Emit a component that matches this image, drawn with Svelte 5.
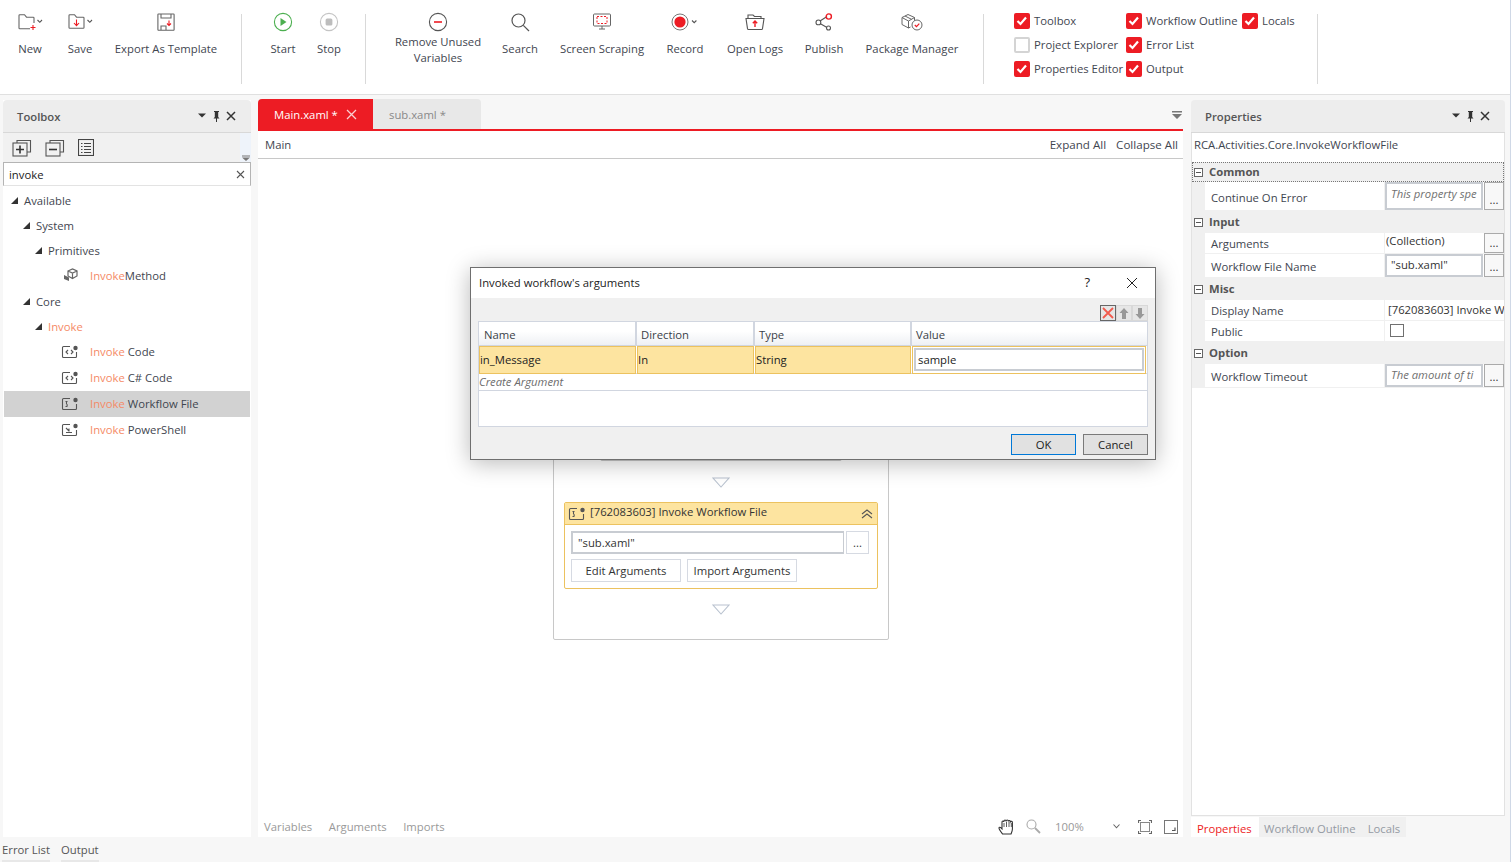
<script>
  const checks = [
    ['Toolbox', true], ['Workflow Outline', true], ['Locals', true],
    ['Project Explorer', false], ['Error List', true], null,
    ['Properties Editor', true], ['Output', true], null
  ];
  const leaves = [
    ['code', 'Code'], ['code', 'C# Code'], ['wf', 'Workflow File'], ['ps', 'PowerShell']
  ];
</script>

{#snippet activity(kind)}
  <svg class="aicon" width="18" height="14" viewBox="0 0 18 14" fill="none" stroke="#555" stroke-width="1.1">
    <path d="M9 1.5H2.5a1 1 0 0 0-1 1v9a1 1 0 0 0 1 1h12a1 1 0 0 0 1-1V7"/>
    <circle cx="14.5" cy="3" r="2.2" fill="#555" stroke="none"/>
    {#if kind === 'code'}
      <path d="M7 5L5 7l2 2M10 5l2 2-2 2"/>
    {:else if kind === 'wf'}
      <path d="M4.5 4.5h2M5.5 4.5v2.5M5.5 7c1 .5 1 2 0 2.5M4.5 9.5h2"/>
    {:else}
      <path d="M5 5l3 3M8 8.6v-3M5 9.5h6"/>
    {/if}
  </svg>
{/snippet}

{#snippet panelHead(title)}
  <div class="phead">
    <span class="ptitle">{title}</span>
    <svg width="40" height="12" viewBox="0 0 40 12">
      <path d="M0 3.5h8l-4 4z" fill="#333"/>
      <path d="M16 1h5v1h-.8v5l1.3 1.5h-2.500V12h-1V8.500h-2.500L16.800 7V2H16z" fill="#333"/>
      <path d="M29 2l8 8M37 2l-8 8" stroke="#333" stroke-width="1.5"/>
    </svg>
  </div>
{/snippet}

{#snippet ellipsisBtn()}
  <span class="dots">...</span>
{/snippet}

<div class="app">
  <header class="toolbar">
    <div class="group g1">
      <div class="tool w50">
        <div class="ic">
          <svg width="26" height="18" viewBox="0 0 26 18" fill="none" stroke="#666" stroke-width="1.1">
            <path d="M2 15V2.5a.8.8 0 0 1 .8-.8h4.7l2 2.5h6.7a.8.8 0 0 1 .8.8V10M13 15.7H2.8a.8.8 0 0 1-.8-.8"/>
            <path d="M13.5 14.5h5M16 12v5" stroke="#ed1c24"/>
            <path d="M20.5 7l2.3 2.3L25 7" stroke="#555"/>
          </svg>
        </div>
        <div class="lbl">New</div>
      </div>
      <div class="tool w50">
        <div class="ic">
          <svg width="26" height="18" viewBox="0 0 26 18" fill="none" stroke="#666" stroke-width="1.1">
            <path d="M2 14.5V2.5a.8.8 0 0 1 .8-.8h4.7l2 2.5h6.7a.8.8 0 0 1 .8.8v9.5a.8.8 0 0 1-.8.8h-13.4a.8.8 0 0 1-.8-.8z"/>
            <path d="M9.5 6.5v6M7 10l2.5 2.7L12 10" stroke="#ed1c24"/>
            <path d="M20.5 7l2.3 2.3L25 7" stroke="#555"/>
          </svg>
        </div>
        <div class="lbl">Save</div>
      </div>
      <div class="tool w122">
        <div class="ic">
          <svg width="18" height="18" viewBox="0 0 18 18" fill="none" stroke="#666" stroke-width="1.1">
            <path d="M1.5 1h15a.6.6 0 0 1 .6.6v15a.6.6 0 0 1-.6.6H1.5a.6.6 0 0 1-.6-.6V1.6a.6.6 0 0 1 .6-.6zM4 1v4h10V1M4 17v-4h5v4"/>
            <path d="M12 7.5v5M10 10.5l2 2 2-2" stroke="#ed1c24"/>
          </svg>
        </div>
        <div class="lbl">Export As Template</div>
      </div>
    </div>
    <div class="group g2">
      <div class="tool w46">
        <div class="ic">
          <svg width="20" height="20" viewBox="0 0 20 20" fill="none">
            <circle cx="10" cy="10" r="8.6" stroke="#4caf50" stroke-width="1.1"/>
            <path d="M7.5 6l6 4-6 4z" fill="#4caf50"/>
          </svg>
        </div>
        <div class="lbl">Start</div>
      </div>
      <div class="tool w46">
        <div class="ic">
          <svg width="20" height="20" viewBox="0 0 20 20" fill="none">
            <circle cx="10" cy="10" r="8.6" stroke="#c4c4c4" stroke-width="1.1"/>
            <rect x="6.6" y="6.6" width="6.8" height="6.8" rx="1.5" fill="#bdbdbd"/>
          </svg>
        </div>
        <div class="lbl">Stop</div>
      </div>
    </div>
    <div class="group g3">
      <div class="tool w110">
        <div class="ic">
          <svg width="20" height="20" viewBox="0 0 20 20" fill="none">
            <circle cx="10" cy="10" r="8.6" stroke="#555" stroke-width="1.1"/>
            <path d="M6 10h8" stroke="#ed1c24" stroke-width="1.6"/>
          </svg>
        </div>
        <div class="lbl two">Remove Unused<br />Variables</div>
      </div>
      <div class="tool w54">
        <div class="ic">
          <svg width="20" height="20" viewBox="0 0 20 20" fill="none" stroke="#555" stroke-width="1.2">
            <circle cx="8.5" cy="8.5" r="6.5"/>
            <path d="M13.3 13.3L19 19"/>
          </svg>
        </div>
        <div class="lbl">Search</div>
      </div>
      <div class="tool w110">
        <div class="ic">
          <svg width="20" height="18" viewBox="0 0 20 18" fill="none" stroke="#666" stroke-width="1">
            <rect x="1.5" y="1" width="17" height="12" rx="1"/>
            <path d="M7 16h6M10 13v3"/>
            <rect x="5" y="3.5" width="10" height="7" stroke="#ed1c24" stroke-dasharray="2 1.5"/>
          </svg>
        </div>
        <div class="lbl">Screen Scraping</div>
      </div>
      <div class="tool w56">
        <div class="ic">
          <svg width="28" height="20" viewBox="0 0 28 20" fill="none">
            <circle cx="9" cy="10" r="8" stroke="#777" stroke-width="1"/>
            <circle cx="9" cy="10" r="5.6" fill="#ed1c24"/>
            <path d="M21 8.5l2.2 2.2 2.2-2.2" stroke="#555" stroke-width="1.1"/>
          </svg>
        </div>
        <div class="lbl">Record</div>
      </div>
      <div class="tool w84">
        <div class="ic">
          <svg width="20" height="18" viewBox="0 0 20 18" fill="none" stroke="#555" stroke-width="1.1">
            <path d="M3 5V2h5l1.5 1.5H16V5M1 5.5h18l-1.5 10.2a1 1 0 0 1-1 .8h-13a1 1 0 0 1-1-.8z"/>
            <path d="M10 14V8M7.8 10.2L10 8l2.2 2.2" stroke="#ed1c24" stroke-width="1.4"/>
          </svg>
        </div>
        <div class="lbl">Open Logs</div>
      </div>
      <div class="tool w54">
        <div class="ic">
          <svg width="18" height="18" viewBox="0 0 18 18" fill="none" stroke="#555" stroke-width="1.1">
            <path d="M5 8l7-4.5M5 10.5l7 4"/>
            <circle cx="3.4" cy="9.4" r="2.4"/>
            <circle cx="13.5" cy="15" r="2"/>
            <circle cx="13.8" cy="3.5" r="2.6" stroke="#ed1c24" stroke-width="1.4"/>
          </svg>
        </div>
        <div class="lbl">Publish</div>
      </div>
      <div class="tool w122">
        <div class="ic">
          <svg width="22" height="18" viewBox="0 0 22 18" fill="none" stroke="#666" stroke-width="1">
            <path d="M1 4.5L7 1.5l6.5 3v3M1 4.5v7l6.5 3.5 2-1M1 4.5L7.500 8v7M7.500 8l6-3.500M4 3l6.500 3.300"/>
            <circle cx="16" cy="12" r="5"/>
            <path d="M13.800 12l1.700 1.700 2.800-3" stroke="#ed1c24" stroke-width="1.2"/>
          </svg>
        </div>
        <div class="lbl">Package Manager</div>
      </div>
    </div>
    <div class="group g4">
      <div class="checks">
        {#each checks as c}
          {#if c}
            <div class="chk">
              <span class="box" class:on={c[1]}>
                {#if c[1]}
                  <svg width="16" height="16" viewBox="0 0 16 16" fill="none">
                    <path d="M3.500 8l3 3 5.500-6.500" stroke="#fff" stroke-width="2.200"/>
                  </svg>
                {/if}
              </span>
              <span class="chktext">{c[0]}</span>
            </div>
          {:else}
            <div></div>
          {/if}
        {/each}
      </div>
    </div>
  </header>

  <main class="body">
    <section class="left">
      {@render panelHead('Toolbox')}
      <div class="ltools">
        <svg width="20" height="18" viewBox="0 0 20 18" fill="none" stroke="#555" stroke-width="1.1">
          <path d="M5 4V1.500h13.500V13H15"/><rect x="1" y="4" width="14" height="13"/>
          <path d="M4 10.500h8M8 6.500v8" stroke="#333" stroke-width="1.600"/>
        </svg>
        <svg width="20" height="18" viewBox="0 0 20 18" fill="none" stroke="#555" stroke-width="1.1">
          <path d="M5 4V1.500h13.500V13H15"/><rect x="1" y="4" width="14" height="13"/>
          <path d="M4 10.500h8" stroke="#333" stroke-width="1.600"/>
        </svg>
        <svg width="16" height="17" viewBox="0 0 16 17" fill="none" stroke="#444" stroke-width="1.100">
          <rect x=".5" y=".5" width="15" height="16"/>
          <path d="M3 4.500h1.500M6 4.500h7M3 7.500h1.500M6 7.500h7M3 10.500h1.500M6 10.500h7M3 13.500h1.500M6 13.500h7"/>
        </svg>
        <div class="scrollcap">
          <svg width="8" height="6" viewBox="0 0 8 6"><path d="M0 .5h8v1H0zM0 2.500h8L4 6z" fill="#777"/></svg>
        </div>
      </div>
      <div class="search">
        <span>invoke</span>
        <svg width="9" height="9" viewBox="0 0 9 9"><path d="M1 1l7 7M8 1L1 8" stroke="#555" stroke-width="1.100"/></svg>
      </div>
      <div class="tree">
        <div class="row d0"><i class="tri"></i>Available</div>
        <div class="row d1"><i class="tri"></i>System</div>
        <div class="row d2"><i class="tri"></i>Primitives</div>
        <div class="row leaf m">
          <svg width="15" height="14" viewBox="0 0 15 14" fill="none" stroke="#666" stroke-width="1.200">
            <path d="M5 3l4.500-2 4.500 2v5l-4.500 2.500L5 8zM5 3l4.500 2 4.500-2M9.500 5v5"/>
            <path d="M1 7l5 2.500V13L1 11z" fill="#666" stroke="none"/>
          </svg>
          <span><b>Invoke</b>Method</span>
        </div>
        <div class="row d1 core"><i class="tri"></i>Core</div>
        <div class="row d2"><i class="tri"></i><b>Invoke</b></div>
        {#each leaves as l}
          <div class="row leaf" class:sel={l[1] === 'Workflow File'}>
            {@render activity(l[0])}
            <span><b>Invoke</b> {l[1]}</span>
          </div>
        {/each}
      </div>
    </section>

    <section class="center">
      <div class="tabs">
        <div class="tab active">Main.xaml *
          <svg width="11" height="11" viewBox="0 0 11 11"><path d="M1 1l9 9M10 1l-9 9" stroke="#fbd0d2" stroke-width="1.300"/></svg>
        </div>
        <div class="tab">sub.xaml *</div>
        <svg class="tabmenu" width="10" height="9" viewBox="0 0 10 9"><path d="M0 0h10v1.500H0zM0 3h10L5 8z" fill="#777"/></svg>
      </div>
      <div class="crumb">
        <span>Main</span>
        <div class="expand"><span>Expand All</span><span>Collapse All</span></div>
      </div>
      <div class="canvas">
        <div class="seq">
          <div class="prev"></div>
          <svg class="drop" width="18" height="11" viewBox="0 0 18 11" fill="none"><path d="M1 1h16l-8 9z" stroke="#b9c2cf" stroke-width="1.100"/></svg>
          <div class="act">
            <div class="acthead">
              {@render activity('wf')}
              <span class="acttitle">[762083603] Invoke Workflow File</span>
              <svg width="12" height="10" viewBox="0 0 12 10" fill="none" stroke="#555" stroke-width="1.100"><path d="M1 5l5-4 5 4M1 9l5-4 5 4"/></svg>
            </div>
            <div class="actbody">
              <div class="actfile">
                <span class="fileinput">"sub.xaml"</span>
                <span class="filedots">...</span>
              </div>
              <div class="actbtns">
                <span class="abtn edit">Edit Arguments</span>
                <span class="abtn imp">Import Arguments</span>
              </div>
            </div>
          </div>
          <svg class="drop d2nd" width="18" height="11" viewBox="0 0 18 11" fill="none"><path d="M1 1h16l-8 9z" stroke="#b9c2cf" stroke-width="1.100"/></svg>
        </div>
      </div>
      <div class="cfoot">
        <div class="cfl"><span>Variables</span><span>Arguments</span><span>Imports</span></div>
        <div class="cfr">
          <svg width="18" height="18" viewBox="0 0 18 18" fill="#fff" stroke="#333" stroke-width="1.100">
            <path d="M4.500 16c-1.500-2-3.500-4.500-3.500-6 0-1 1.200-1 2-.2l1 1V4c0-1.300 1.700-1.300 1.800 0 0-2.500 2.200-2.500 2.300-.5 0-2 2.200-2 2.300 0 .2-1.300 2-1.200 2 .3.500-.8 2-.6 2 .7V11c0 2-.8 3.500-1.400 5z"/>
            <path d="M6 5v4M8.500 4v5M11 4v5M13.300 5v4" stroke-width=".8"/>
          </svg>
          <svg class="mag" width="15" height="15" viewBox="0 0 15 15" fill="none" stroke="#aaa" stroke-width="1.100">
            <circle cx="5.500" cy="5.500" r="4.500"/><path d="M9 9l5 5" stroke-width="1.800"/>
          </svg>
          <span class="zoomv">100%</span>
          <svg class="chev" width="7" height="5" viewBox="0 0 7 5" fill="none" stroke="#666" stroke-width="1.100"><path d="M.5.500L3.500 3.800 6.500.500"/></svg>
          <svg class="fit" width="14" height="14" viewBox="0 0 14 14" fill="none" stroke="#666" stroke-width="1">
            <rect x="2.500" y="2.500" width="9" height="9" stroke="#888"/>
            <path d="M.5 3V.500H3M11 .5h2.500V3M.5 11v2.500H3M11 13.500h2.500V11" stroke-width="1.200"/>
          </svg>
          <svg class="over" width="14" height="14" viewBox="0 0 14 14" fill="none" stroke="#777" stroke-width="1">
            <rect x=".5" y=".5" width="13" height="13"/>
            <path d="M8 10.500h3v-3" stroke="#555" stroke-width="1.200"/>
          </svg>
        </div>
      </div>

      <div class="dialog">
        <div class="dtitle">
          <span class="dname">Invoked workflow's arguments</span>
          <span class="help">?</span>
          <svg width="12" height="12" viewBox="0 0 12 12"><path d="M1 1l10 10M11 1L1 11" stroke="#222" stroke-width="1"/></svg>
        </div>
        <div class="dbody">
          <div class="dtools">
            <span class="dt del">
              <svg width="12" height="12" viewBox="0 0 12 12"><path d="M1 1l10 10M11 1L1 11" stroke="#f25b4e" stroke-width="1.800"/></svg>
            </span>
            <span class="dt">
              <svg width="10" height="11" viewBox="0 0 10 11"><path d="M5 0l4.500 5H7v6H3V5H.5z" fill="#999"/></svg>
            </span>
            <span class="dt">
              <svg width="10" height="11" viewBox="0 0 10 11"><path d="M5 11L.5 6H3V0h4v6h2.500z" fill="#999"/></svg>
            </span>
          </div>
          <div class="dgrid">
            <div class="dhead">
              <span class="cn">Name</span><span class="cd">Direction</span><span class="ct">Type</span><span class="cv">Value</span>
            </div>
            <div class="drow">
              <span class="cn">in_Message</span><span class="cd">In</span><span class="ct">String</span>
              <span class="cv"><span class="valbox">sample</span></span>
            </div>
            <div class="dcreate">Create Argument</div>
            <div class="dempty"></div>
          </div>
          <div class="dbtns">
            <span class="dbtn ok">OK</span>
            <span class="dbtn">Cancel</span>
          </div>
        </div>
      </div>
    </section>

    <section class="right">
      {@render panelHead('Properties')}
      <div class="rbody">
        <div class="rtype">RCA.Activities.Core.InvokeWorkflowFile</div>
        <div class="pg">
          <div class="cat first"><i class="pm"></i>Common</div>
          <div class="prop h29">
            <span class="pn">Continue On Error</span>
            <span class="pv input ph">This property spe</span>{@render ellipsisBtn()}
          </div>
          <div class="cat c22"><i class="pm"></i>Input</div>
          <div class="prop h21">
            <span class="pn">Arguments</span>
            <span class="pv plain col">(Collection)</span>{@render ellipsisBtn()}
          </div>
          <div class="prop h24">
            <span class="pn">Workflow File Name</span>
            <span class="pv input">"sub.xaml"</span>{@render ellipsisBtn()}
          </div>
          <div class="cat c22"><i class="pm"></i>Misc</div>
          <div class="prop h21">
            <span class="pn">Display Name</span>
            <span class="pv plain wide">[762083603] Invoke W</span>
          </div>
          <div class="prop h21">
            <span class="pn">Public</span>
            <span class="pv plain"><i class="cb"></i></span>
          </div>
          <div class="cat c22"><i class="pm"></i>Option</div>
          <div class="prop h24">
            <span class="pn">Workflow Timeout</span>
            <span class="pv input ph">The amount of ti</span>{@render ellipsisBtn()}
          </div>
        </div>
      </div>
      <div class="rtabs">
        <span class="rtab on">Properties</span>
        <span class="rtab">Workflow Outline</span>
        <span class="rtab last">Locals</span>
      </div>
    </section>
  </main>

  <footer class="foot">
    <span>Error List</span>
    <span>Output</span>
  </footer>
</div>

<style>
  :global(body) {
    margin: 0;
    background: #f7f7f7;
  }
  .app {
    width: 1511px;
    height: 862px;
    display: flex;
    flex-direction: column;
    overflow: hidden;
    background: #f7f7f7;
    font-family: "Open Sans", "Noto Sans", sans-serif;
    font-size: 11.3px;
    color: #3f4650;
    border-right: 1px solid #cfd8e6;
    box-sizing: border-box;
  }
  svg { display: block; flex: none; }

  .toolbar {
    height: 94px;
    flex: none;
    display: flex;
    background: #fff;
    border-bottom: 1px solid #e0e0e0;
  }
  .group {
    display: flex;
    align-self: flex-start;
    height: 70px;
    margin-top: 14px;
    border-right: 1px solid #d9d9d9;
    box-sizing: content-box;
  }
  .g1 { padding-left: 5px; width: 236px; }
  .g2 { padding-left: 18px; width: 105px; }
  .g3 { padding-left: 17px; width: 600px; }
  .g4 { padding-left: 30px; width: 303px; }
  .tool {
    margin-top: -14px;
    display: flex;
    flex-direction: column;
    align-items: center;
    flex: none;
  }
  .w46 { width: 46px; }
  .w50 { width: 50px; }
  .w54 { width: 54px; }
  .w56 { width: 56px; }
  .w84 { width: 84px; }
  .w110 { width: 110px; }
  .w122 { width: 122px; }
  .ic {
    height: 44px;
    display: flex;
    align-items: center;
    justify-content: center;
  }
  .lbl {
    line-height: 16px;
    text-align: center;
    white-space: nowrap;
    margin-top: -3px;
  }
  .lbl.two { margin-top: -10px; }
  .checks {
    display: grid;
    grid-template-columns: 112px 116px auto;
    grid-auto-rows: 24px;
    margin-top: -5px;
  }
  .chk {
    display: flex;
    align-items: center;
    gap: 4px;
    white-space: nowrap;
  }
  .chktext { margin-top: -2px; }
  .box {
    width: 16px;
    height: 16px;
    border-radius: 2px;
    box-sizing: border-box;
    border: 2px solid #d4d4d4;
    flex: none;
    display: block;
  }
  .box.on { background: #ed1c24; border: 0; }

  .body {
    flex: 1;
    min-height: 0;
    display: flex;
    padding-top: 5px;
    padding-left: 3px;
  }
  .left {
    width: 248px;
    flex: none;
    display: flex;
    flex-direction: column;
    background: #fff;
  }
  .phead {
    height: 32px;
    flex: none;
    box-sizing: content-box;
    background: #ededed;
    border-bottom: 1px solid #d8d8d8;
    border-radius: 4px 4px 0 0;
    display: flex;
    align-items: center;
    justify-content: space-between;
    padding: 0 13px 0 14px;
  }
  .ptitle { font-weight: 600; color: #555; }
  .ltools {
    height: 29px;
    flex: none;
    background: #f1f1f1;
    display: flex;
    align-items: center;
    gap: 13px;
    padding-left: 9px;
    position: relative;
  }
  .scrollcap {
    position: absolute;
    right: 0;
    top: 0;
    bottom: 0;
    width: 11px;
    background: #eef3fa;
    display: flex;
    align-items: flex-end;
    justify-content: center;
    padding-bottom: 1px;
    box-sizing: border-box;
  }
  .search {
    height: 24px;
    box-sizing: border-box;
    flex: none;
    display: flex;
    align-items: center;
    justify-content: space-between;
    padding: 0 5px 0 5px;
    background: #fff;
    border: 1px solid #b4b4b4;
    border-bottom-color: #e3e3e3;
    color: #222;
  }
  .tree { flex: 1; padding-top: 1.500px; background: #fff; }
  .row {
    height: 25px;
    display: flex;
    align-items: center;
    white-space: nowrap;
  }
  .row b { font-weight: 400; color: #f58a66; }
  .d0 { padding-left: 8px; }
  .d1 { padding-left: 20px; }
  .d2 { padding-left: 32px; }
  .core { margin-top: 1px; }
  .tri {
    width: 0;
    height: 0;
    border-style: solid;
    border-width: 0 0 7px 7px;
    border-color: transparent transparent #333 transparent;
    margin-right: 6px;
    display: block;
  }
  .leaf {
    height: 26px;
    padding-left: 54px;
    gap: 10px;
    margin: 0 1px;
  }
  .leaf.m { height: 25px; padding-left: 59px; gap: 12px; }
  .leaf .aicon { margin-left: 3px; margin-right: 1px; }
  .leaf.sel { background: #d2d2d2; }

  .center {
    width: 925px;
    flex: none;
    margin-left: 7px;
    margin-top: -1px;
    display: flex;
    flex-direction: column;
    position: relative;
  }
  .tabs {
    height: 30px;
    flex: none;
    display: flex;
    align-items: stretch;
    border-bottom: 2px solid #ed1c24;
    position: relative;
  }
  .tab {
    width: 108px;
    background: #e8e8e8;
    color: #888;
    display: flex;
    align-items: center;
    padding-left: 16px;
    box-sizing: border-box;
    border-radius: 0 4px 0 0;
  }
  .tab.active {
    width: 115px;
    background: #ed1c24;
    color: #fff;
    border-radius: 4px 0 0 0;
    gap: 8px;
  }
  .tabmenu { position: absolute; right: 1px; top: 12px; }
  .crumb {
    height: 27px;
    flex: none;
    background: #fff;
    border-bottom: 1px solid #c8c8c8;
    display: flex;
    align-items: center;
    justify-content: space-between;
    padding: 0 5px 0 7px;
  }
  .expand { display: flex; gap: 10px; font-size: 11.6px; }
  .canvas {
    flex: 1;
    background: #fff;
    min-height: 0;
    padding: 262px 0 0 295px;
    box-sizing: border-box;
  }
  .seq {
    width: 336px;
    height: 219px;
    box-sizing: border-box;
    border: 1px solid #c8c8c8;
    border-radius: 2px;
    display: flex;
    flex-direction: column;
    align-items: center;
  }
  .prev {
    width: 242px;
    height: 39px;
    box-sizing: border-box;
    border: 1px solid #c8c8c8;
    border-radius: 2px;
    flex: none;
  }
  .drop { margin-top: 16px; flex: none; }
  .drop.d2nd { margin-top: 15px; }
  .act {
    width: 314px;
    margin-top: 14px;
    height: 87px;
    box-sizing: border-box;
    border: 1px solid #ecc25f;
    border-radius: 2px;
    flex: none;
  }
  .acthead {
    height: 21px;
    background: #fde4a0;
    border-bottom: 1px solid #ecc25f;
    display: flex;
    align-items: center;
    padding: 0 4px 0 3px;
    color: #333;
  }
  .acttitle { margin-left: 4px; flex: 1; margin-top: -4px; }
  .actbody { padding: 6px 8px 0 6px; }
  .actfile { display: flex; gap: 2px; }
  .fileinput {
    width: 273px;
    height: 23px;
    box-sizing: border-box;
    border: 2px solid #c8ccd2;
    border-right-width: 1px;
    padding-left: 5px;
    line-height: 20px;
    color: #333;
  }
  .filedots {
    width: 23px;
    height: 23px;
    box-sizing: border-box;
    border: 1px solid #d6dae2;
    text-align: center;
    line-height: 22px;
    color: #333;
  }
  .actbtns { display: flex; gap: 6px; margin-top: 5px; }
  .abtn {
    height: 23px;
    box-sizing: border-box;
    border: 1px solid #d6dae2;
    text-align: center;
    line-height: 21px;
    color: #333;
  }
  .edit { width: 110px; }
  .imp { width: 110px; }
  .cfoot {
    height: 25px;
    flex: none;
    background: #fff;
    display: flex;
    justify-content: space-between;
    align-items: center;
    padding: 4px 5px 0 6px;
    box-sizing: border-box;
    color: #999;
  }
  .cfl { display: flex; gap: 16.5px; }
  .cfr { display: flex; align-items: center; }
  .mag { margin-left: 10px; }
  .zoomv { margin-left: 14px; width: 30px; }
  .chev { margin-left: 28px; }
  .fit { margin-left: 18px; }
  .over { margin-left: 12px; }

  .dialog {
    position: absolute;
    left: 212px;
    top: 168px;
    width: 686px;
    height: 193px;
    box-sizing: border-box;
    border: 1px solid #6f6f6f;
    background: #f0f0f0;
    box-shadow: 0 3px 22px rgba(0, 0, 0, .28);
    color: #222;
    display: flex;
    flex-direction: column;
  }
  .dtitle {
    height: 30px;
    flex: none;
    background: #fff;
    display: flex;
    align-items: center;
    padding: 0 17px 0 8px;
  }
  .dname { flex: 1; margin-top: -2px; }
  .help { margin-right: 36px; font-size: 13px; margin-top: -2px; }
  .dbody { flex: 1; padding: 7px 7px 0 7px; }
  .dtools { display: flex; justify-content: flex-end; height: 16px; }
  .dt {
    width: 16px;
    height: 16px;
    box-sizing: border-box;
    background: #e6e6e6;
    border: 1px solid #d8d8d8;
    display: flex;
    align-items: center;
    justify-content: center;
  }
  .dt.del { border-color: #666; }
  .dgrid {
    height: 106px;
    box-sizing: border-box;
    background: #fff;
    border: 1px solid #d1d6e0;
    display: flex;
    flex-direction: column;
  }
  .dhead, .drow { display: grid; grid-template-columns: 158px 118px 157px 1fr; }
  .dhead {
    height: 23px;
    flex: none;
    background: linear-gradient(#fff 40%, #eef0f4);
    border-bottom: 1px solid #d1d6e0;
  }
  .dhead span {
    border-right: 2px solid #d1d6e0;
    padding: 3px 0 0 4px;
    line-height: 20px;
    color: #3a3f48;
  }
  .dhead span.cn { padding-left: 5px; }
  .dhead span:last-child { border: 0; }
  .drow {
    height: 27px;
    flex: none;
    border-bottom: 1px solid #d1d6e0;
  }
  .drow span {
    background: #fde4a0;
    box-sizing: border-box;
    border: 1px solid #ecc25f;
    margin-right: 1px;
    padding-left: 0;
    line-height: 26px;
  }
  .drow .cv {
    background: #fff;
    padding: 1px;
    margin-right: 1px;
    border-color: #ecc25f;
  }
  .drow .cv .valbox {
    display: block;
    height: 23px;
    background: #fff;
    margin: 0;
    border: 2px solid #c8ccd2;
    padding-left: 2px;
    line-height: 19px;
  }
  .dcreate {
    height: 16px;
    flex: none;
    border-bottom: 1px solid #d1d6e0;
    font-style: italic;
    color: #6d6d6d;
    line-height: 16px;
  }
  .dempty { flex: 1; }
  .dbtns { display: flex; justify-content: flex-end; gap: 7px; margin-top: 7px; }
  .dbtn {
    width: 65px;
    height: 21px;
    box-sizing: border-box;
    background: #e1e1e1;
    border: 1px solid #7a7a7a;
    text-align: center;
    line-height: 20px;
  }
  .dbtn.ok { border-color: #0078d7; }

  .right {
    width: 314px;
    flex: none;
    margin-left: 8px;
    display: flex;
    flex-direction: column;
  }
  .rbody {
    flex: 1;
    min-height: 0;
    background: #fff;
    border: 1px solid #e2e2e2;
    border-top: 0;
    box-sizing: border-box;
  }
  .rtype {
    height: 25px;
    line-height: 24px;
    padding-left: 2px;
  }
  .cat {
    height: 22px;
    background: #f0f0f0;
    display: flex;
    align-items: center;
    font-weight: 700;
    color: #555;
    padding: 0 0 2px 2px;
    box-sizing: border-box;
  }
  .cat.first {
    height: 20px;
    border: 1px dotted #777;
    margin-top: 4px;
    padding: 0 0 2px 1px;
  }
  .pm {
    width: 9px;
    height: 9px;
    box-sizing: border-box;
    border: 1px solid #666;
    margin-right: 6px;
    margin-top: 2px;
    display: block;
    flex: none;
    background: #fff;
    background-image: linear-gradient(#555, #555);
    background-size: 5px 1px;
    background-position: center;
    background-repeat: no-repeat;
  }
  .prop {
    display: flex;
    align-items: stretch;
    border-left: 13px solid #f0f0f0;
    border-bottom: 1px solid #f0f0f0;
    box-sizing: border-box;
  }
  .h29 { height: 29px; }
  .h21 { height: 21px; }
  .h24 { height: 24px; }
  .pn {
    width: 180px;
    flex: none;
    padding: 1px 0 0 6px;
    box-sizing: border-box;
    border-right: 1px solid #f0f0f0;
    display: flex;
    align-items: center;
  }
  .h29 .pn { padding-top: 3px; }
  .pv {
    flex: 1;
    min-width: 0;
    overflow: hidden;
    white-space: nowrap;
    box-sizing: border-box;
  }
  .pv.input {
    width: 98px;
    flex: none;
    border: 2px solid #c8ccd2;
    padding-left: 4px;
    line-height: 17px;
    color: #333;
  }
  .h29 .pv.input { line-height: 20px; }
  .pv.ph { font-style: italic; color: #707070; }
  .pv.plain { padding-left: 3px; color: #333; line-height: 18px; }
  .pv.col { padding-left: 1px; width: 98px; flex: none; line-height: 16px; }
  .pv.wide { line-height: 20px; }
  .cb {
    display: block;
    width: 14px;
    height: 13px;
    border: 1px solid #707070;
    box-sizing: border-box;
    margin: 3px 0 0 2px;
  }
  .dots {
    width: 20px;
    flex: none;
    margin-left: 1px;
    box-sizing: border-box;
    border: 1px solid #aaa;
    background: #f8f8f8;
    color: #333;
    line-height: 18px;
    display: flex;
    align-items: flex-end;
    justify-content: center;
  }
  .rtabs {
    height: 20px;
    flex: none;
    margin-top: 1px;
    display: flex;
  }
  .rtab {
    background: #f0f0f0;
    color: #949aa3;
    padding: 0 5px;
    line-height: 24px;
  }
  .rtab.last { padding: 0 6px 0 7px; }
  .rtab.on { background: #fff; color: #ed1c24; width: 68px; padding: 0 6px; box-sizing: border-box; }
  .foot {
    height: 25px;
    flex: none;
    display: flex;
    gap: 11px;
    padding-left: 2px;
    align-items: flex-start;
    color: #555;
  }
  .foot span {
    height: 25px;
    line-height: 25px;
    box-sizing: border-box;
    border-bottom: 2px solid #e8e8e8;
  }
</style>
